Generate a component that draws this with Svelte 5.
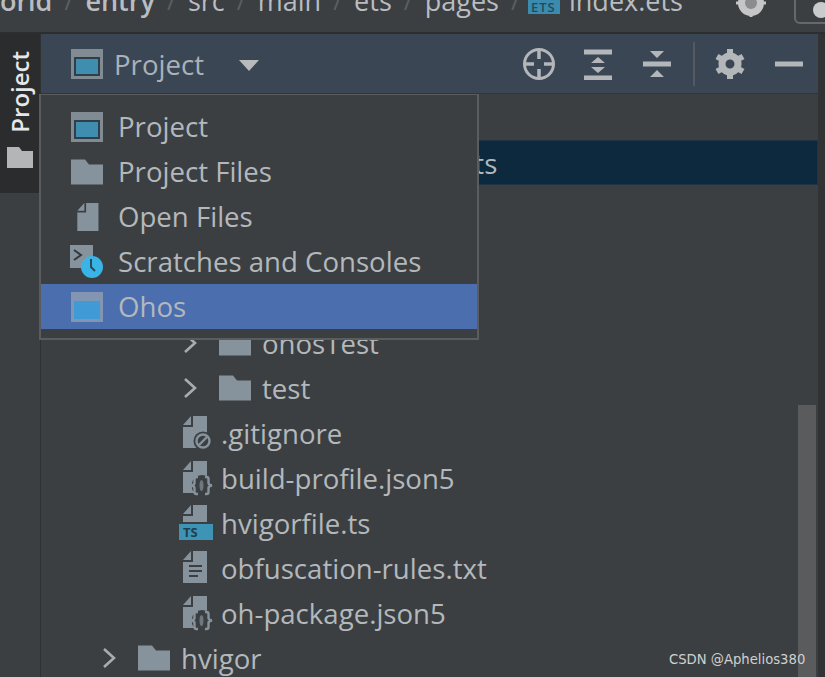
<script>
  const crumbs = [
    { label: 'HelloWorld', cls: 'first', bold: true },
    { label: 'entry', bold: true },
    { label: 'src' },
    { label: 'main' },
    { label: 'ets' },
    { label: 'pages' }
  ];

  const menu = [
    { label: 'Project', icon: 'project' },
    { label: 'Project Files', icon: 'folder' },
    { label: 'Open Files', icon: 'file' },
    { label: 'Scratches and Consoles', icon: 'scratch' },
    { label: 'Ohos', icon: 'ohos', active: true }
  ];

  const tree = [
    { label: 'src/main/resources/ts', indent: 174, selected: true },
    { label: '' },
    { label: '' },
    { label: '' },
    { label: 'ohosTest', indent: 142, icon: 'folder', arrow: true },
    { label: 'test', indent: 142, icon: 'folder', arrow: true },
    { label: '.gitignore', indent: 138, icon: 'ignore' },
    { label: 'build-profile.json5', indent: 138, icon: 'json' },
    { label: 'hvigorfile.ts', indent: 138, icon: 'ts' },
    { label: 'obfuscation-rules.txt', indent: 138, icon: 'text' },
    { label: 'oh-package.json5', indent: 138, icon: 'json' },
    { label: 'hvigor', indent: 61, icon: 'folder', arrow: true }
  ];
</script>

{#snippet doc()}
  <path d="M14 0H28V32H4V11H14Z" fill="#87939c" />
  <path d="M4 9L12 0V9Z" fill="#87939c" />
{/snippet}

{#snippet icon(name)}
  {#if name === 'project' || name === 'ohos'}
    <svg class="ic-wide" viewBox="0 0 32 30">
      <rect width="32" height="30" fill={name === 'ohos' ? '#8296b4' : '#808b94'} />
      {#if name === 'ohos'}
        <rect x="3" y="9" width="26" height="18" fill="#3f9ad6" />
      {:else}
        <rect x="3" y="8" width="26" height="19" fill="#2f3e48" />
        <rect x="5" y="10" width="22" height="15" fill="#3f8eb0" />
      {/if}
    </svg>
  {:else if name === 'folder'}
    <svg class="ic-wide" viewBox="0 0 32 30">
      <path d="M0 2.5H14L18 7.5H32V27.5H0Z" fill="#87939c" />
    </svg>
  {:else if name === 'file'}
    <svg class="ic-wide" viewBox="0 0 32 34">
      <g transform="translate(1 1)">{@render doc()}</g>
    </svg>
  {:else if name === 'scratch'}
    <svg class="ic-scratch" viewBox="0 0 34 33">
      <rect width="23" height="23" fill="#87939c" />
      <path d="M4 5L11 10L4 15" fill="none" stroke="#33373a" stroke-width="2" />
      <circle cx="22" cy="22" r="11" fill="#3ab4e6" />
      <path d="M21 14V22L25 26" fill="none" stroke="#2b4a58" stroke-width="2" />
    </svg>
  {:else}
    <svg class="ic-file" viewBox="0 0 34 36">
      {#if name === 'ts'}
        <path d="M14 0H28V17H4V11H14Z" fill="#87939c" />
        <path d="M4 9L12 0V9Z" fill="#87939c" />
        <rect y="19" width="34" height="16" fill="#3d94b4" />
        <text x="4" y="32" class="badge-text">TS</text>
      {:else}
        <g transform="translate(0 1)">{@render doc()}</g>
      {/if}
      {#if name === 'ignore'}
        <circle cx="24" cy="26" r="9.5" fill="#3c3f41" />
        <circle cx="24" cy="26" r="6.5" fill="none" stroke="#87939c" stroke-width="2.4" />
        <path d="M20 30L28 22" stroke="#87939c" stroke-width="2.4" />
      {:else if name === 'json'}
        <circle cx="23" cy="25.5" r="10.5" fill="#3c3f41" />
        <ellipse cx="22.5" cy="25.5" rx="2" ry="5.5" fill="#6d7880" />
        <path d="M19 17H17.5Q15.5 17 15.5 19V23Q15.5 25 12 25.5Q15.5 26 15.5 28V32Q15.5 34 17.5 34H19M26 17H27.5Q29.5 17 29.5 19V23Q29.5 25 33 25.5Q29.5 26 29.5 28V32Q29.5 34 27.5 34H26"
          fill="none" stroke="#87939c" stroke-width="2.4" />
      {:else if name === 'text'}
        <path d="M10 16H23M10 21H23M10 26H19" stroke="#3c3f41" stroke-width="2" />
      {/if}
    </svg>
  {/if}
{/snippet}

<div class="ide">
  <header class="crumbs">
    {#each crumbs as crumb}
      <span class="crumb {crumb.cls || ''}" class:bold={crumb.bold}>{crumb.label}</span>
      <span class="sep">/</span>
    {/each}
    <svg class="ets" viewBox="0 0 32 14">
      <rect width="32" height="14" fill="#3a8bad" />
      <text x="3" y="12" class="ets-text">ETS</text>
    </svg>
    <span class="crumb index">index.ets</span>
    <svg class="run-target" viewBox="0 0 30 30">
      <circle cx="15" cy="16" r="9.5" fill="#8a8c8e" stroke="#c4c6c8" stroke-width="7" />
      <path d="M15 27V30M0 16H3M27 16H30" stroke="#c4c6c8" stroke-width="3" />
    </svg>
    <div class="device"><span class="dot"></span></div>
  </header>

  <main class="body">
    <aside class="strip">
      <div class="tool-tab">
        <span class="tool-label">Project</span>
        <svg class="tool-folder" viewBox="0 0 26 21">
          <path d="M0 0H12L15 4H26V21H0Z" fill="#b3b5b7" />
        </svg>
      </div>
    </aside>

    <section class="panel">
      <div class="panel-head">
        <div class="title">
          {@render icon('project')}
          <span>Project</span>
          <svg class="caret" viewBox="0 0 20 11"><path d="M0 0H20L10 11Z" fill="#b8babc" /></svg>
        </div>
        <div class="actions">
          <svg viewBox="0 0 32 32">
            <circle cx="16" cy="16" r="14.5" fill="none" stroke="#b4b7ba" stroke-width="3" />
            <path d="M16 2V11M16 21V30M2 16H11M21 16H30" stroke="#b4b7ba" stroke-width="3.5" />
          </svg>
          <svg class="narrow gap-expand" viewBox="0 0 28 32">
            <path d="M0 1.5H28V6.5H0ZM0 27.5H28V32H0ZM14 9L21 15H7ZM14 25L7 19H21Z" fill="#b4b7ba" />
          </svg>
          <svg class="narrow gap-collapse" viewBox="0 0 28 32">
            <path d="M0 13.5H28V18.5H0ZM14 10L7 3H21ZM14 22L21 29H7Z" fill="#b4b7ba" />
          </svg>
          <span class="divider"></span>
          <svg class="gap-gear" viewBox="0 0 32 32">
            <path d="M16 8a8 8 0 1 0 0 16a8 8 0 1 0 0-16Z" fill="none" stroke="#b4b7ba" stroke-width="7" />
            <path d="M16 1V6M16 26V31M3 8.5L7.5 11M24.5 21L29 23.5M3 23.5L7.5 21M24.5 11L29 8.5"
              stroke="#b4b7ba" stroke-width="6" />
          </svg>
          <svg class="narrow gap-expand" viewBox="0 0 28 32">
            <rect y="13.5" width="28" height="5" fill="#b4b7ba" />
          </svg>
        </div>
      </div>

      <div class="tree">
        {#each tree as row}
          <div class="row" class:selected={row.selected} style="padding-left: {row.indent || 0}px">
            {#if row.arrow}
              <svg class="chevron" viewBox="0 0 14 22">
                <path d="M2 2L12 11L2 20" fill="none" stroke="#a8acb0" stroke-width="2.6" />
              </svg>
            {/if}
            {#if row.icon}
              {@render icon(row.icon)}
            {/if}
            <span class="row-label">{row.label}</span>
          </div>
        {/each}
      </div>

      <div class="scrollbar"></div>

      <div class="popup">
        {#each menu as item}
          <div class="menu-item" class:active={item.active}>
            <span class="menu-icon">{@render icon(item.icon)}</span>
            <span class="menu-label">{item.label}</span>
          </div>
        {/each}
      </div>
    </section>

    <div class="edge"></div>
  </main>

  <div class="watermark">CSDN @Aphelios380</div>
</div>

<style>
  :global(body) {
    margin: 0;
    background: #3c3f41;
  }

  .ide {
    position: relative;
    width: 825px;
    height: 677px;
    display: flex;
    flex-direction: column;
    overflow: hidden;
    background: #3c3f41;
    color: #b3b8bc;
    font-family: "Open Sans", "Noto Sans", sans-serif;
    font-size: 27.6px;
  }

  .crumbs {
    flex: none;
    box-sizing: border-box;
    height: 34px;
    padding-bottom: 21px;
    display: flex;
    align-items: flex-end;
    border-bottom: 2px solid #2c2e30;
    background: #3c3f41;
    overflow: hidden;
    white-space: nowrap;
    line-height: 20px;
    font-size: 27px;
    color: #b9bdc1;
  }

  .crumb {
    flex: none;
  }

  .crumb.first {
    margin-left: -93px;
  }

  .bold {
    font-weight: 600;
  }

  .sep {
    flex: none;
    width: 33px;
    text-align: center;
    color: #5c5f61;
    font-size: 24px;
  }

  .ets {
    flex: none;
    width: 32px;
    height: 14px;
    margin-left: -4px;
    margin-bottom: -3px;
  }

  .ets-text {
    font: 600 13px "Open Sans", sans-serif;
    fill: #234a5a;
    letter-spacing: 1px;
  }

  .index {
    margin-left: 9px;
  }

  .run-target {
    flex: none;
    width: 30px;
    height: 30px;
    margin-left: 53px;
    margin-bottom: -6px;
  }

  .device {
    flex: none;
    box-sizing: border-box;
    width: 60px;
    height: 50px;
    margin-left: 28px;
    margin-bottom: -13px;
    border: 2px solid #66696b;
    border-radius: 6px;
    position: relative;
  }

  .dot {
    position: absolute;
    left: 17px;
    bottom: 4px;
    width: 16px;
    height: 16px;
    border-radius: 50%;
    background: #c9cbcd;
  }

  .body {
    flex: 1;
    min-height: 0;
    display: flex;
  }

  .strip {
    flex: none;
    width: 41px;
    background: #3c3f41;
    border-right: 1px solid #2f3133;
    box-sizing: border-box;
  }

  .tool-tab {
    height: 159px;
    background: #2a2c2e;
    display: flex;
    flex-direction: column;
    align-items: center;
    padding-top: 17px;
    box-sizing: border-box;
  }

  .tool-label {
    writing-mode: vertical-rl;
    transform: rotate(180deg);
    color: #e6e7e8;
    font-size: 24px;
    font-weight: 600;
    line-height: 30px;
  }

  .tool-folder {
    width: 26px;
    height: 21px;
    margin-top: 14px;
  }

  .panel {
    flex: 1;
    min-width: 0;
    position: relative;
    display: flex;
    flex-direction: column;
  }

  .panel-head {
    flex: none;
    box-sizing: border-box;
    height: 60px;
    padding: 0 15px 0 30px;
    display: flex;
    align-items: center;
    justify-content: space-between;
    background: #3b4654;
    border-bottom: 1px solid #333638;
  }

  .title {
    display: flex;
    align-items: center;
    color: #aab1b8;
  }

  .title span {
    margin-left: 11px;
  }

  .caret {
    width: 20px;
    height: 11px;
    margin-left: 35px;
    margin-top: 4px;
  }

  .actions {
    display: flex;
    align-items: center;
  }

  .actions svg {
    width: 32px;
    height: 32px;
  }

  .actions svg.narrow {
    width: 28px;
  }

  .gap-expand {
    margin-left: 29px;
  }

  .gap-collapse {
    margin-left: 31px;
  }

  .gap-gear {
    margin-left: 19px;
  }

  .divider {
    width: 2px;
    height: 44px;
    margin-left: 22px;
    background: #555a60;
  }

  .ic-wide {
    flex: none;
    width: 32px;
    height: 30px;
  }

  .ic-scratch {
    flex: none;
    width: 34px;
    height: 33px;
  }

  .ic-file {
    flex: none;
    width: 34px;
    height: 36px;
  }

  .badge-text {
    font: 700 13px "Open Sans", sans-serif;
    fill: #1f3f4e;
  }

  .tree {
    flex: 1;
    min-height: 0;
    padding-top: 46px;
    overflow: hidden;
  }

  .row {
    height: 45px;
    display: flex;
    align-items: center;
    box-sizing: border-box;
    white-space: nowrap;
    line-height: 45px;
  }

  .row-label {
    margin-top: 2px;
  }

  .row > :global(svg.ic-wide) {
    margin-right: 11px;
  }

  .row > :global(svg.ic-file) {
    margin-right: 8px;
  }

  .row.selected {
    background: #0d293e;
    border: 1px solid #1c3348;
    border-left: 0;
  }

  .chevron {
    flex: none;
    width: 14px;
    height: 22px;
    margin-right: 22px;
  }

  .scrollbar {
    position: absolute;
    right: 2px;
    top: 371px;
    bottom: 0;
    width: 18px;
    background: #595b5d;
  }

  .popup {
    position: absolute;
    left: -2px;
    top: 60px;
    box-sizing: border-box;
    width: 440px;
    height: 246px;
    padding: 9px 0;
    background: #3c3f41;
    border: 2px solid #5a5c5e;
    border-top-width: 1px;
  }

  .menu-item {
    height: 45px;
    padding-left: 30px;
    display: flex;
    align-items: center;
    gap: 15px;
    white-space: nowrap;
  }

  .menu-item.active {
    background: #4b6eaf;
  }

  .menu-icon {
    width: 32px;
    height: 33px;
    display: flex;
    align-items: center;
    justify-content: center;
  }

  .menu-label {
    margin-top: -2px;
  }

  .edge {
    flex: none;
    width: 7px;
    background: #313335;
  }

  .watermark {
    position: absolute;
    left: 669px;
    top: 652px;
    font-family: "DejaVu Sans", sans-serif;
    font-size: 13.2px;
    line-height: 16px;
    color: #d0d0d0;
  }
</style>
